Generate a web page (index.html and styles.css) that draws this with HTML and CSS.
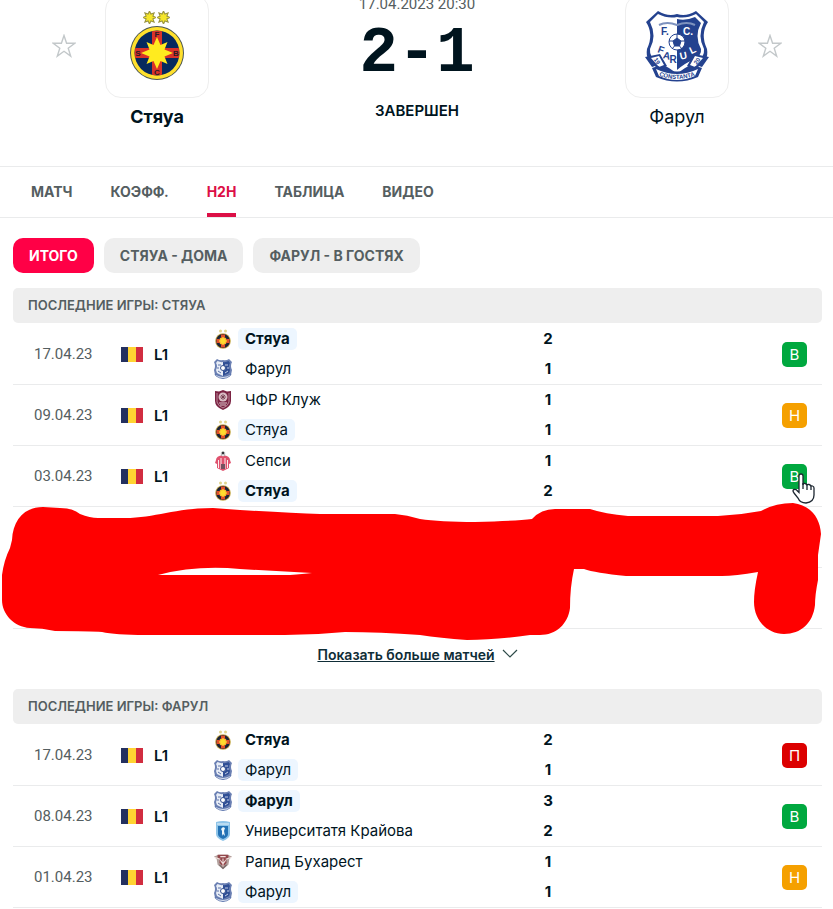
FILE: index.html
```html
<!DOCTYPE html>
<html lang="ru">
<head>
    <meta charset="UTF-8">
    <meta name="viewport" content="width=device-width, initial-scale=1.0">
    <title>Стяуа - Фарул</title>
    <link rel="stylesheet" href="styles.css">
</head>
<body>
    <svg class="sprite" aria-hidden="true">
        <symbol id="sun" viewBox="0 0 24 24">
            <path d="M12 0l2.600 5.700L20.500 3.500l-2.200 5.900L24 12l-5.700 2.600 2.200 5.900-5.900-2.200L12 24l-2.600-5.700-5.900 2.200 2.200-5.900L0 12l5.700-2.600-2.200-5.900 5.900 2.200z"/>
        </symbol>
        <symbol id="steaua-small" viewBox="0 0 18 20">
            <circle cx="6.500" cy="2" r="1.500" fill="#e2d58c"/><circle cx="11.500" cy="2" r="1.500" fill="#e2d58c"/>
            <circle cx="9" cy="12" r="7.800" fill="#c4a94a"/>
            <circle cx="9" cy="12" r="6.900" fill="#1c2236"/>
            <path d="M7 5.500h4V10h4.500v4H11v4.500H7V14H2.500v-4H7z" fill="#e0522b"/>
            <path d="M9 8l1 1.600 1.900-.5-.5 1.900L13 12l-1.600 1 .5 1.900-1.900-.5L9 16l-1-1.600-1.900.5.5-1.900L5 12l1.600-1-.5-1.900 1.900.5z" fill="#ffdc2e" stroke="#ffdc2e" stroke-width=".5"/>
        </symbol>
        <symbol id="farul-small" viewBox="0 0 18 20">
            <path d="M3 0q3 2 6 1 3 1 6-1l3 3q-2 4 0 8l-1 5-8 4-8-4-1-5q2-4 0-8z" fill="#6b80b3"/>
            <path d="M3.500 2q3 1.500 5.500 1v14l-6-3-1-3q2-4 0-7z" fill="#e8edf6"/>
            <path d="M9 3q3 .5 5.500-1L16 4q-2 3 0 7l-1 3-6 3z" fill="#304f95"/>
            <circle cx="9" cy="9" r="2.500" fill="#fff" stroke="#34508f"/>
            <path d="M4 6h3M4 8v2M4 12l3 2" stroke="#5c73aa"/>
            <path d="M11 6h3M14 8v2M11 14l3-2" stroke="#c5cfe5"/>
            <path d="M1 15q8 5 16 0l-1 2q-7 5-14 0z" fill="#dbe2f0" stroke="#4b65a3" stroke-width=".7"/>
        </symbol>
        <symbol id="cluj" viewBox="0 0 18 20">
            <path d="M1 1l4 .5L9 0l4 1.500 4-.5v10q0 6-8 9-8-3-8-9z" fill="#7b2343"/>
            <path d="M3 3v9q1 4 6 6 5-2 6-6V3" fill="none" stroke="#caa2ae" stroke-width=".8"/>
            <circle cx="9" cy="7" r="4.500" fill="#d9bdc5"/>
            <path d="M6 7h6M9 4v6M7 5l4 4M11 5l-4 4" stroke="#6d3548" stroke-width=".8"/>
            <path d="M5 13h8M6 15h6" stroke="#e0c7ce"/>
        </symbol>
        <symbol id="sepsi" viewBox="0 0 18 20">
            <path d="M2 9q0-4 7-5 7 1 7 5l1 3-2 1v4l-6 3-6-3v-4l-2-1z" fill="#e0526e"/>
            <path d="M4.500 9v8M7 7v11M11 7v11M13.500 9v8" stroke="#fff" stroke-width=".9"/>
            <circle cx="9" cy="2.700" r="2.500" fill="#e5e5e8"/>
            <path d="M8 1h2v2H8zM7 4h1M10 4h1" fill="#34343a" stroke="#34343a" stroke-width=".5"/>
            <path d="M7 13h4v5H7z" fill="#745361"/>
        </symbol>
        <symbol id="craiova" viewBox="0 0 18 20">
            <path d="M2 1q7-2 14 0v12q0 4-7 7-7-3-7-7z" fill="#8ec4e8"/>
            <path d="M4 5h10v8q0 3-5 5-5-2-5-5z" fill="#2372b5"/>
            <path d="M3 3h12" stroke="#e7f3fa"/>
            <path d="M9 6l2 1-1 3 1 5-2-2-1 2V10l-1-2z" fill="#eef7fc"/>
        </symbol>
        <symbol id="rapid" viewBox="0 0 20 20">
            <path d="M0 4l5-2h10l5 2-3 3-1 6-6 5-6-5-1-6z" fill="#b3a19d"/>
            <path d="M4 2h12v3q-3 1-2 6l-4 4-4-4q1-5-2-6z" fill="#93474c"/>
            <path d="M1 5l6 2M19 5l-6 2M7 4h6M7 8l3 4 3-4M10 6v9" stroke="#f0dfdc" stroke-width="1.200" fill="none"/>
            <path d="M6 13l4 4 4-4" fill="none" stroke="#7b6d6c" stroke-width="1.500"/>
        </symbol>
        <symbol id="star" viewBox="0 0 24 24">
            <path d="M12 1.500l2.600 7.800h8.200l-6.600 4.900 2.500 7.900L12 17.300l-6.700 4.800 2.500-7.900-6.600-4.900h8.200z" fill="none" stroke="#c3c8ca" stroke-width="1.400"/>
        </symbol>
        <symbol id="romania" viewBox="0 0 22 15">
            <path d="M0 0h7v15H0z" fill="#24305f"/><path d="M7 0h8v15H7z" fill="#ffd432"/><path d="M15 0h7v15h-7z" fill="#d12d40"/>
        </symbol>
    </svg>

    <header class="match-header">
        <button class="favorite" type="button" aria-label="Добавить Стяуа"><svg width="24" height="24"><use href="#star"/></svg></button>
        <div class="team">
            <a class="team-logo" href="#" aria-label="Стяуа">
                <svg width="56" height="70" viewBox="0 0 56 70">
                    <g fill="#f5e62a" stroke="#9a9440" stroke-width="2">
                        <use href="#sun" x="14" y="0" width="13" height="13"/>
                        <use href="#sun" x="28" y="0" width="13" height="13"/>
                    </g>
                    <circle cx="28" cy="42" r="27" fill="#4a5550"/>
                    <circle cx="28" cy="42" r="26" fill="#ffe02d"/>
                    <circle cx="28" cy="42" r="22.500" fill="#06295e"/>
                    <path d="M23 20.200a22.500 22.500 0 0 1 10 0V37h16.800a22.500 22.500 0 0 1 0 10H33v16.800a22.500 22.500 0 0 1-10 0V47H6.200a22.500 22.500 0 0 1 0-10H23z" fill="#d93228"/>
                    <path d="M28 26l3.500 8 7-3-3 7.500 8.500 3.500-8.500 3.500 3 7.500-7-3-3.500 8-3.500-8-7 3 3-7.500L12 42l8.500-3.500-3-7.500 7 3z" fill="#ffeb1f"/>
                    <g class="crest-text" fill="#291c26" font-size="8">
                        <text x="28" y="26">F</text><text x="9" y="45">S</text>
                        <text x="47" y="45">B</text><text x="28" y="64">C</text>
                    </g>
                </svg>
            </a>
            <a class="team-name winner" href="#">Стяуа</a>
        </div>
        <div class="result">
            <div class="start-time">17.04.2023 20:30</div>
            <div class="final-score">2-1</div>
            <div class="match-status">ЗАВЕРШЕН</div>
        </div>
        <div class="team">
            <a class="team-logo" href="#" aria-label="Фарул">
                <svg width="64" height="72" viewBox="0 0 64 72">
                    <path d="M13 1q10 6 19 3 9 3 19-3l12 11q-8 12-1 27 2 12-9 17-12 5-21 11-9-6-21-11Q0 51 2 39 9 24 1 12z" fill="#24428f"/>
                    <path d="M13 4q10 5 19 3 9 2 19-3l8 8q-7 14 0 27 1 9-9 14-10 4-18 11-8-7-18-11-10-5-9-14 7-13 0-27z" fill="#fff"/>
                    <path d="M32 9q9 2 18-2l6 6q-7 13 0 26 1 7-8 11-8 3-16 10z" fill="#24428f"/>
                    <path d="M14 15q8-4 18 0 10-4 18 0" fill="none" stroke="#7e92be" stroke-width="2"/>
                    <circle cx="32" cy="32" r="8" fill="#fff" stroke="#24428f"/>
                    <path d="M32 28l4 3-1.500 5h-5L28 31zM32 24v4M40 31h-4M37 39l-2.500-3M27 39l2.500-3M24 31h4" fill="#24428f" stroke="#24428f"/>
                    <g class="crest-text" font-size="10" fill="#24428f">
                        <text x="20" y="25">F.</text>
                        <text x="15" y="43" transform="rotate(20 15 43)">F</text>
                        <text x="21" y="49" transform="rotate(12 21 49)">A</text>
                        <text x="28" y="53">R</text>
                    </g>
                    <g class="crest-text" font-size="10" fill="#fff">
                        <text x="43" y="25">C.</text>
                        <text x="39" y="49" transform="rotate(-12 39 49)">U</text>
                        <text x="49" y="43" transform="rotate(-25 49 43)">L</text>
                    </g>
                    <path d="M0 47l15-3 7 12-9 4-3-4-3 1zM64 47l-15-3-7 12 9 4 3-4 3 1z" fill="#24428f"/>
                    <path d="M6 48l8-2 5 9-5 2zM58 48l-8-2-5 9 5 2z" fill="#fff"/>
                    <path d="M7 58l6-2q19 11 38 0l6 2-4 9q-21 9-42 0z" fill="#24428f"/>
                    <path d="M11 59q21 10 42 0l-3 7q-18 8-36 0z" fill="#fff"/>
                    <path id="ribbon" d="M12 65q20 8 40 0" fill="none"/>
                    <g class="crest-text" font-size="6" fill="#24428f">
                        <text><textPath href="#ribbon" startOffset="50%">CONSTANTA</textPath></text>
                        <text x="12" y="53" transform="rotate(55 12 51)">19</text>
                        <text x="52" y="53" transform="rotate(-55 52 51)">20</text>
                    </g>
                </svg>
            </a>
            <a class="team-name" href="#">Фарул</a>
        </div>
        <button class="favorite" type="button" aria-label="Добавить Фарул"><svg width="24" height="24"><use href="#star"/></svg></button>
    </header>

    <nav class="tabs">
        <a href="#">МАТЧ</a>
        <a href="#">КОЭФФ.</a>
        <a href="#" class="active">H2H</a>
        <a href="#">ТАБЛИЦА</a>
        <a href="#">ВИДЕО</a>
    </nav>

    <main>
        <div class="filters">
            <button type="button" class="active">ИТОГО</button>
            <button type="button">СТЯУА - ДОМА</button>
            <button type="button">ФАРУЛ - В ГОСТЯХ</button>
        </div>

        <section class="h2h">
            <h2>ПОСЛЕДНИЕ ИГРЫ: СТЯУА</h2>
            <table>
                <colgroup><col class="col-date"><col class="col-league"><col><col class="col-score"><col class="col-result"></colgroup>
                <tr>
                    <td class="date">17.04.23</td>
                    <td><div class="league"><svg width="22" height="15"><use href="#romania"/></svg>L1</div></td>
                    <td>
                        <div class="side"><svg class="crest"><use href="#steaua-small"/></svg><span class="name current winner">Стяуа</span></div>
                        <div class="side"><svg class="crest"><use href="#farul-small"/></svg><span class="name">Фарул</span></div>
                    </td>
                    <td class="score"><div>2</div><div>1</div></td>
                    <td class="outcome"><button type="button" class="badge win">В</button></td>
                </tr>
                <tr>
                    <td class="date">09.04.23</td>
                    <td><div class="league"><svg width="22" height="15"><use href="#romania"/></svg>L1</div></td>
                    <td>
                        <div class="side"><svg class="crest"><use href="#cluj"/></svg><span class="name">ЧФР Клуж</span></div>
                        <div class="side"><svg class="crest"><use href="#steaua-small"/></svg><span class="name current">Стяуа</span></div>
                    </td>
                    <td class="score"><div>1</div><div>1</div></td>
                    <td class="outcome"><button type="button" class="badge draw">Н</button></td>
                </tr>
                <tr>
                    <td class="date">03.04.23</td>
                    <td><div class="league"><svg width="22" height="15"><use href="#romania"/></svg>L1</div></td>
                    <td>
                        <div class="side"><svg class="crest"><use href="#sepsi"/></svg><span class="name">Сепси</span></div>
                        <div class="side"><svg class="crest"><use href="#steaua-small"/></svg><span class="name current winner">Стяуа</span></div>
                    </td>
                    <td class="score"><div>1</div><div>2</div></td>
                    <td class="outcome">
                        <button type="button" class="badge win">В</button>
                        <svg class="pointer" width="24" height="31" viewBox="0 0 24 31">
                            <path d="M7 3q0-2 2-2t2 2v9q0-2 2-1.500t2 2q0-1.500 2-1t2 2q0-1 1.500-.5T22 15v7q0 7-8 8-6 0-8-5l-4-5q-2-3 0-3.500t3 1l2 2z" fill="#fff" stroke="#1c2630" stroke-width="1.300"/>
                            <path d="M11 10v6M15 12v5M19 13v4" stroke="#1c2630" stroke-width="1.300"/>
                        </svg>
                    </td>
                </tr>
                <tr><td></td><td></td><td></td><td></td><td></td></tr>
                <tr><td></td><td></td><td></td><td></td><td></td></tr>
            </table>
            <svg class="scribble" width="833" height="140" viewBox="0 501 833 140" aria-hidden="true">
                <path fill="#f00" fill-rule="evenodd" d="M12 540C13 520 24 507 43 507L60 508Q73 508 80 514Q90 518 98 518H125C155 518 175 508 213 508L240 510Q290 513 320 514H395Q407 515 420 519Q440 522 475 522Q515 521 532 519Q541 509 555 509H590Q605 514 628 516H718Q740 515 761 511Q775 503 793 503C810 505 820 517 821 534L818 555V580Q815 595 815 605C813 623 801 634 784 634C767 634 754 620 754 602Q754 590 758 572Q735 576 722 576H626Q595 573 584 569H574Q570 587 570 608C568 624 556 635 540 635H530Q495 640 467 640Q440 638 420 635Q380 632 345 632Q315 635 285 635H145Q115 635 102 632Q90 631 55 631Q42 628 30 628C14 627 2 614 2 600V575Q4 560 10 548zM158 575H290Q303 574 312 573L240 569Q196 565 158 575z"/>
            </svg>
            <a class="show-more" href="#"><span>Показать больше матчей</span><svg width="16" height="10" viewBox="0 0 16 10"><path d="M1 1l7 7 7-7" fill="none" stroke="#2d4a48" stroke-width="1.200"/></svg></a>
        </section>

        <section class="h2h">
            <h2>ПОСЛЕДНИЕ ИГРЫ: ФАРУЛ</h2>
            <table>
                <colgroup><col class="col-date"><col class="col-league"><col><col class="col-score"><col class="col-result"></colgroup>
                <tr>
                    <td class="date">17.04.23</td>
                    <td><div class="league"><svg width="22" height="15"><use href="#romania"/></svg>L1</div></td>
                    <td>
                        <div class="side"><svg class="crest"><use href="#steaua-small"/></svg><span class="name winner">Стяуа</span></div>
                        <div class="side"><svg class="crest"><use href="#farul-small"/></svg><span class="name current">Фарул</span></div>
                    </td>
                    <td class="score"><div>2</div><div>1</div></td>
                    <td class="outcome"><button type="button" class="badge loss">П</button></td>
                </tr>
                <tr>
                    <td class="date">08.04.23</td>
                    <td><div class="league"><svg width="22" height="15"><use href="#romania"/></svg>L1</div></td>
                    <td>
                        <div class="side"><svg class="crest"><use href="#farul-small"/></svg><span class="name current winner">Фарул</span></div>
                        <div class="side"><svg class="crest"><use href="#craiova"/></svg><span class="name">Университатя Крайова</span></div>
                    </td>
                    <td class="score"><div>3</div><div>2</div></td>
                    <td class="outcome"><button type="button" class="badge win">В</button></td>
                </tr>
                <tr>
                    <td class="date">01.04.23</td>
                    <td><div class="league"><svg width="22" height="15"><use href="#romania"/></svg>L1</div></td>
                    <td>
                        <div class="side"><svg class="crest"><use href="#rapid"/></svg><span class="name">Рапид Бухарест</span></div>
                        <div class="side"><svg class="crest"><use href="#farul-small"/></svg><span class="name current">Фарул</span></div>
                    </td>
                    <td class="score"><div>1</div><div>1</div></td>
                    <td class="outcome"><button type="button" class="badge draw">Н</button></td>
                </tr>
            </table>
        </section>
    </main>
</body>
</html>
```
FILE: styles.css
```css
* {
    box-sizing: border-box;
}
body {
    margin: 0;
    background: #fff;
    color: #00141e;
    font-family: Inter, "Liberation Sans", sans-serif;
    font-size: 15px;
    overflow-x: hidden;
}
a {
    color: inherit;
    text-decoration: none;
}
button {
    border: none;
    font-family: inherit;
    cursor: pointer;
}
svg {
    display: block;
    flex-shrink: 0;
}
.sprite {
    width: 0;
    height: 0;
}
.crest-text {
    font-family: "Liberation Sans", sans-serif;
    font-weight: bold;
    text-anchor: middle;
}

/* header */
.match-header {
    display: flex;
    justify-content: center;
    align-items: flex-start;
    height: 173px;
    margin-top: -6px;
    padding-left: 1px;
    border-bottom: 1px solid #eaebec;
}
.favorite {
    background: none;
    padding: 0;
    margin: 40px 11px 0 11px;
}
.team {
    width: 140px;
    display: flex;
    flex-direction: column;
    align-items: center;
}
.team-logo {
    width: 104px;
    height: 104px;
    display: flex;
    align-items: center;
    justify-content: center;
    border: 1px solid #eee;
    border-radius: 16px;
}
.team-name {
    margin-top: 8px;
    font-size: 18px;
    line-height: 22px;
}
.winner {
    font-weight: 700;
}
.result {
    width: 380px;
    text-align: center;
}
.start-time {
    color: #555e61;
    font-family: Roboto, sans-serif;
    font-size: 15px;
    line-height: 20px;
}
.final-score {
    font-family: "Liberation Mono", monospace;
    font-size: 64px;
    font-weight: 700;
    line-height: 80px;
}
.match-status {
    margin-top: 7px;
    font-size: 15px;
    font-weight: 600;
    line-height: 20px;
}

/* tabs */
.tabs {
    display: flex;
    gap: 38px;
    height: 51px;
    padding: 0 31px;
    border-bottom: 1px solid #eaebec;
    color: #555e61;
    font-size: 14px;
    font-weight: 700;
    line-height: 50px;
}
.tabs .active {
    color: #dc0f46;
    background: linear-gradient(#dc0f46, #dc0f46) bottom / 100% 4px no-repeat;
}
main {
    padding: 20px 11px 0 13px;
}
.filters {
    display: flex;
    gap: 10px;
    margin-bottom: 15px;
}
.filters button {
    height: 35px;
    padding: 0 16px;
    border-radius: 10px;
    background: #eee;
    color: #555e61;
    font-size: 14px;
    font-weight: 700;
}
.filters .active {
    background: #ff0046;
    color: #fff;
}

/* match lists */
.h2h {
    position: relative;
}
.h2h h2 {
    margin: 0;
    padding: 0 15px;
    border-radius: 5px;
    background: #eee;
    color: #555e61;
    font-size: 13px;
    font-weight: 600;
    line-height: 35px;
}
table {
    width: 100%;
    padding-top: 1px;
    table-layout: fixed;
    border-spacing: 0;
}
.col-date {
    width: 108px;
}
.col-league {
    width: 93px;
}
.col-score {
    width: 42px;
}
.col-result {
    width: 253px;
}
td {
    height: 61px;
    padding: 0;
    border-bottom: 1px solid #eaebec;
}
.date {
    padding-left: 21px;
    color: #555e61;
    font-family: Roboto, sans-serif;
}
.league {
    display: flex;
    align-items: center;
    gap: 11px;
    font-weight: 600;
}
.side {
    display: flex;
    align-items: center;
    gap: 6px;
    height: 30px;
}
.crest {
    width: 18px;
    height: 20px;
}
.name {
    padding: 0 7px;
    border-radius: 5px;
    line-height: 22px;
}
.current {
    background: #edf6ff;
}
.score {
    text-align: center;
    font-weight: 700;
    line-height: 30px;
}
.outcome {
    position: relative;
    padding-right: 15px;
}
.badge {
    display: block;
    width: 25px;
    height: 25px;
    margin-left: auto;
    padding: 0;
    border-radius: 5px;
    color: #fff;
    font-size: 15px;
}
.win {
    background: #00a83f;
}
.draw {
    background: #f5a000;
}
.loss {
    background: #dc0000;
}
.pointer {
    position: absolute;
    right: 6px;
    top: 27px;
    z-index: 1;
}
.scribble {
    position: absolute;
    left: -13px;
    top: 213px;
    pointer-events: none;
}
.show-more {
    display: flex;
    align-items: center;
    justify-content: center;
    gap: 7px;
    height: 60px;
    padding-bottom: 10px;
    color: #0f2d37;
    font-size: 14px;
    font-weight: 600;
}
.show-more span {
    text-decoration: underline;
}
```
